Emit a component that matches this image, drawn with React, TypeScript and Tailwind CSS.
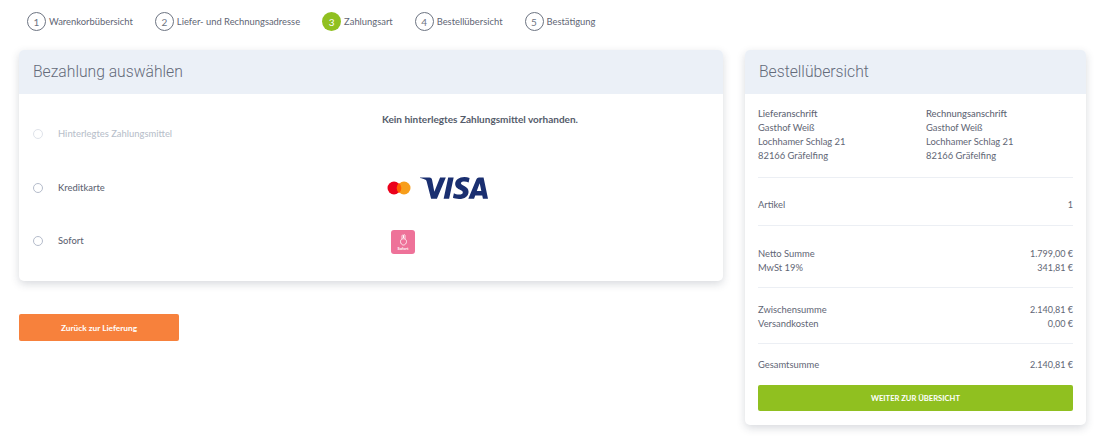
import { SiVisa } from "react-icons/si";

const steps = [
  { n: 1, label: "Warenkorbübersicht" },
  { n: 2, label: "Liefer- und Rechnungsadresse" },
  { n: 3, label: "Zahlungsart", active: true },
  { n: 4, label: "Bestellübersicht" },
  { n: 5, label: "Bestätigung" },
];

function Radio({ disabled }: { disabled?: boolean }) {
  return (
    <span
      className={`block w-[10px] h-[10px] rounded-full border bg-white ${
        disabled ? "border-[#dfe3ea]" : "border-[#b5bccb]"
      }`}
    />
  );
}

function Row({ left, right, className = "" }: { left: string; right: string; className?: string }) {
  return (
    <div className={`flex justify-between h-[14px] items-center ${className}`}>
      <span>{left}</span>
      <span className="text-[9px]">{right}</span>
    </div>
  );
}

function Divider() {
  return <div className="h-px bg-[#eceff4]" />;
}

function Mastercard() {
  return (
    <svg width="24" height="14" viewBox="0 0 24 14">
      <circle cx="7" cy="7" r="6.5" fill="#eb001b" />
      <circle cx="17" cy="7" r="6.5" fill="#f79e1b" />
      <path d="M12 2a6.5 6.5 0 0 1 0 10a6.5 6.5 0 0 1 0-10z" fill="#ff5f00" />
    </svg>
  );
}

function SofortBadge() {
  return (
    <div className="w-[24px] h-[24px] rounded-[3px] bg-[#ee7299] flex flex-col items-center justify-center">
      <svg width="9" height="12" viewBox="0 0 9 12" fill="none" stroke="#ffffff" strokeWidth="0.8">
        <path d="M3 5V1.6a.8.8 0 0 1 1.5 0V4M4.5 4V1.2a.8.8 0 0 1 1.5 0V5" />
        <path d="M1.5 7.5C1.5 5.5 3 4.8 4.5 4.8S7.5 5.6 7.5 7.5 6.2 11 4.5 11 1.5 9.5 1.5 7.5z" />
      </svg>
      <span className="text-[4px] leading-[5px] font-bold text-white">Sofort</span>
    </div>
  );
}

export default function App() {
  return (
    <div className="w-[1095px] h-[436px] overflow-hidden bg-white text-[9.4px] leading-[14px] text-[#5f6675] font-['Lato',sans-serif]">
      {/* Stepper */}
      <div className="flex h-[50px] pl-[27px] pt-[12px] gap-[22px]">
        {steps.map((s) => (
          <div key={s.n} className="flex items-start gap-[3px]">
            <span
              className={`w-[19px] h-[19px] rounded-full flex items-center justify-center text-[10px] ${
                s.active
                  ? "bg-[#90c020] text-white"
                  : "border border-[#6d7482] text-[#6d7482]"
              }`}
            >
              {s.n}
            </span>
            <span className="leading-[19px]">{s.label}</span>
          </div>
        ))}
      </div>

      <div className="flex items-start pl-[19px] gap-[22px]">
        {/* Payment */}
        <div className="w-[704px]">
          <div className="h-[231px] rounded-[5px] overflow-hidden bg-white shadow-[0_3px_8px_rgba(40,50,70,0.18)]">
            <div className="h-[44px] bg-[#ebf0f7] px-[14px] flex items-center text-[15.7px] font-light text-[#636a79] font-['Roboto',sans-serif]">
              Bezahlung auswählen
            </div>
            <div className="grid grid-cols-[349px_1fr] pl-[14px]">
              <div className="h-[39px] pt-[33px] flex items-start gap-[15px] text-[#b9bfcb] font-medium [&>span:first-child]:mt-[2px]">
                <Radio disabled />
                <span className="leading-[14px]">Hinterlegtes Zahlungsmittel</span>
              </div>
              <div className="pt-[18px] h-[39px] text-[10px] font-bold text-[#555c6b]">
                Kein hinterlegtes Zahlungsmittel vorhanden.
              </div>
              <div className="h-[14px]" />
              <div className="h-[14px]" />
              <div className="h-[54px] flex items-center gap-[15px] mt-[13px] pt-px">
                <Radio />
                <span className="font-medium">Kreditkarte</span>
              </div>
              <div className="h-[54px] flex items-center gap-[9px] pl-[5px] mt-[13px] pt-px">
                <Mastercard />
                <div className="h-[24px] mt-[1px] flex items-center text-[#1a2f70]">
                  <SiVisa size={68} />
                </div>
              </div>
              <div className="h-[52px] flex items-center gap-[15px] pt-px">
                <Radio />
                <span className="font-medium">Sofort</span>
              </div>
              <div className="h-[52px] flex items-center pl-[9px] pt-[4px]">
                <SofortBadge />
              </div>
            </div>
          </div>
          <button className="mt-[33px] w-[160px] h-[27px] rounded-[2px] bg-[#f7813c] text-white text-[8.3px] font-bold">
            Zurück zur Lieferung
          </button>
        </div>

        {/* Summary */}
        <div className="w-[341px] h-[375px] rounded-[5px] overflow-hidden bg-white shadow-[0_3px_8px_rgba(40,50,70,0.18)]">
          <div className="h-[44px] bg-[#ebf0f7] px-[14px] flex items-center text-[15.7px] font-light text-[#636a79] font-['Roboto',sans-serif]">
            Bestellübersicht
          </div>
          <div className="px-[13px] pt-[13px]">
            <div className="grid grid-cols-[168px_1fr] pb-[14px]">
              <div>
                <div className="font-medium">Lieferanschrift</div>
                <div>Gasthof Weiß</div>
                <div>Lochhamer Schlag 21</div>
                <div>82166 Gräfelfing</div>
              </div>
              <div>
                <div className="font-medium">Rechnungsanschrift</div>
                <div>Gasthof Weiß</div>
                <div>Lochhamer Schlag 21</div>
                <div>82166 Gräfelfing</div>
              </div>
            </div>
            <Divider />
            <Row left="Artikel" right="1" className="mt-[20px] mb-[13px]" />
            <Divider />
            <div className="pt-[21px] pb-[12px]">
              <Row left="Netto Summe" right="1.799,00 €" />
              <Row left="MwSt 19%" right="341,81 €" />
            </div>
            <Divider />
            <div className="pt-[15px] pb-[12px]">
              <Row left="Zwischensumme" right="2.140,81 €" />
              <Row left="Versandkosten" right="0,00 €" />
            </div>
            <Divider />
            <Row left="Gesamtsumme" right="2.140,81 €" className="mt-[14px]" />
            <button className="mt-[13px] w-full h-[26px] rounded-[2px] bg-[#90c020] text-white text-[7.6px] font-bold uppercase">
              Weiter zur Übersicht
            </button>
          </div>
        </div>
      </div>
    </div>
  );
}
